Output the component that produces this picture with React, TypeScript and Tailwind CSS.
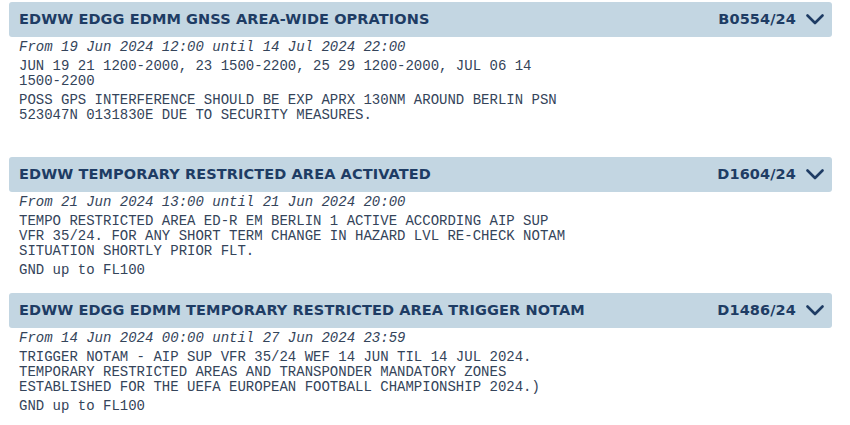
import React from "react";

type Notam = {
  title: string;
  id: string;
  from: string;
  paras: string[][];
  limit?: string;
};

const notams: Notam[] = [
  {
    title: "EDWW EDGG EDMM GNSS AREA-WIDE OPRATIONS",
    id: "B0554/24",
    from: "From 19 Jun 2024 12:00 until 14 Jul 2024 22:00",
    paras: [
      ["JUN 19 21 1200-2000, 23 1500-2200, 25 29 1200-2000, JUL 06 14", "1500-2200"],
      ["POSS GPS INTERFERENCE SHOULD BE EXP APRX 130NM AROUND BERLIN PSN", "523047N 0131830E DUE TO SECURITY MEASURES."],
    ],
  },
  {
    title: "EDWW TEMPORARY RESTRICTED AREA ACTIVATED",
    id: "D1604/24",
    from: "From 21 Jun 2024 13:00 until 21 Jun 2024 20:00",
    paras: [
      [
        "TEMPO RESTRICTED AREA ED-R EM BERLIN 1 ACTIVE ACCORDING AIP SUP",
        "VFR 35/24. FOR ANY SHORT TERM CHANGE IN HAZARD LVL RE-CHECK NOTAM",
        "SITUATION SHORTLY PRIOR FLT.",
      ],
    ],
    limit: "GND up to FL100",
  },
  {
    title: "EDWW EDGG EDMM TEMPORARY RESTRICTED AREA TRIGGER NOTAM",
    id: "D1486/24",
    from: "From 14 Jun 2024 00:00 until 27 Jun 2024 23:59",
    paras: [
      [
        "TRIGGER NOTAM - AIP SUP VFR 35/24 WEF 14 JUN TIL 14 JUL 2024.",
        "TEMPORARY RESTRICTED AREAS AND TRANSPONDER MANDATORY ZONES",
        "ESTABLISHED FOR THE UEFA EUROPEAN FOOTBALL CHAMPIONSHIP 2024.)",
      ],
    ],
    limit: "GND up to FL100",
  },
];

function Chevron() {
  return (
    <svg width="18" height="11" viewBox="0 0 18 11" fill="none" className="shrink-0">
      <polyline points="1.5,1.5 9,9 16.5,1.5" stroke="#1e3c64" strokeWidth="2.6" strokeLinecap="round" strokeLinejoin="round" />
    </svg>
  );
}

function Card({ n }: { n: Notam }) {
  return (
    <div className="mb-[15px]">
      <div className="flex h-[35px] items-center justify-between rounded-[3px] bg-[#c3d6e2] pl-[10px] pr-[8px] text-[14.5px] font-bold tracking-[0.1px] text-[#1e3c64] [font-family:'DejaVu_Sans',Verdana,sans-serif]">
        <span>{n.title}</span>
        <span className="flex items-center gap-[10px]">
          <span>{n.id}</span>
          <Chevron />
        </span>
      </div>
      <div className="pl-[10px] text-[14px] leading-[15px] text-[#34445a] [font-family:'Liberation_Mono','Courier_New',monospace]">
        <div className="mt-[3px] italic">{n.from}</div>
        {n.paras.map((p, i) => (
          <div key={i} className="mt-[4px]">
            {p.map((l, j) => (
              <div key={j} className="whitespace-pre">{l}</div>
            ))}
          </div>
        ))}
        <div className="mt-[4px] whitespace-pre">{n.limit ?? "\u00a0"}</div>
      </div>
    </div>
  );
}

export default function App() {
  return (
    <div className="h-[425px] w-[850px] overflow-hidden bg-white pl-[9px] pt-[2px]">
      <div className="w-[823px]">
        {notams.map((n) => (
          <Card key={n.id} n={n} />
        ))}
      </div>
    </div>
  );
}
